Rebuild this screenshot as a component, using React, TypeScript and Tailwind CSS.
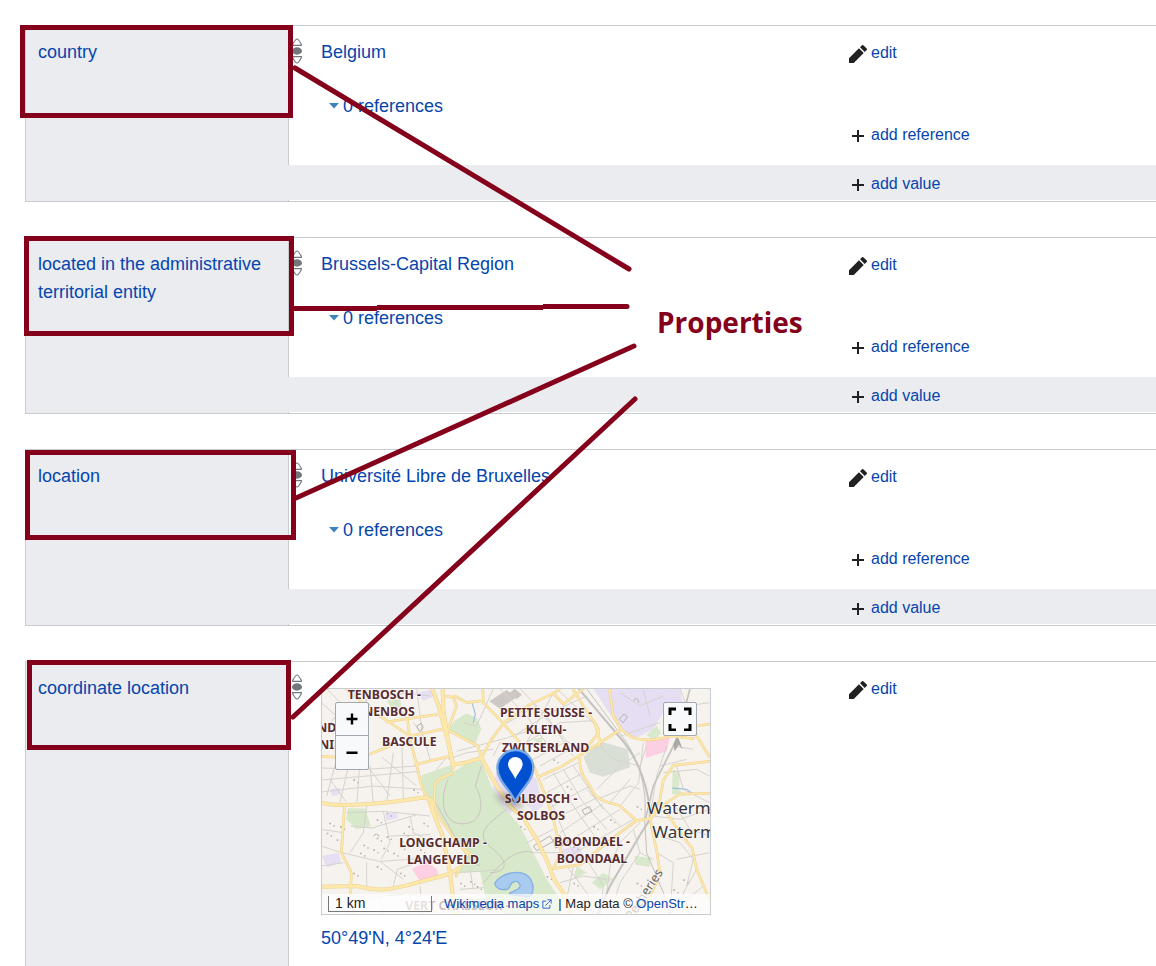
import type { ReactNode } from 'react';

const majorRoads = [
  'M335 5 L356 60 L382 160 L400 236 L436 230 L484 216 L530 300 L570 360 L610 396 L650 460 L684 530 L702 580 L730 620 L752 690',
  'M368 5 L370 70 L380 140 L398 236',
  'M4 350 C60 366 200 352 300 336 C340 332 340 350 336 372 L368 450 L390 560 L398 625 L408 690',
  'M4 602 L110 600 C180 618 210 610 260 598 L388 564 L420 545',
];

const roads = [
  'M75 5 L150 70 L270 150',
  'M270 150 L376 128 L440 162 L474 180 L484 216',
  'M4 212 L80 214 L150 204 L210 180',
  'M200 108 L262 98 L350 86',
  'M262 98 L270 160 L290 236 L302 290 L336 372',
  'M286 236 L384 212',
  'M400 236 L398 262 C370 276 346 274 344 304 C338 360 350 390 376 420 L420 480 L444 504 L420 545 L408 570',
  'M420 480 L460 510',
  'M404 30 L440 50 L490 44 L488 8',
  'M376 30 L400 34 L410 60 L380 140',
  'M490 50 L550 112 L600 170 L640 236 L656 280 L680 340 L700 400 L724 500',
  'M484 216 L512 164 L552 110 L630 55 L700 22 L720 8',
  'M656 272 L720 244 L780 208 L840 170 L900 132',
  'M780 208 C776 260 792 270 812 304 C824 340 850 344 900 360 L950 404 L990 398',
  'M758 8 L790 60 L824 110 L840 165 L836 180',
  'M784 206 L836 140 L830 118',
  'M868 8 L880 90 L904 130 C940 170 1000 166 1050 150 L1120 158',
  'M1090 60 L1130 150 L1168 212',
  'M1130 120 L1168 114',
  'M1168 226 L1060 238 L1030 282 L1020 340 L990 398 L1010 496 L1022 570',
  'M990 398 L1040 350 L1080 324 L1168 322',
  'M1040 380 L1080 440 L1116 486 L1130 550 L1168 640',
  'M700 548 L780 536 L836 490 L900 440 L950 404',
  'M724 500 L700 548',
  'M74 356 L64 500 L94 560 L92 620 L100 690',
  'M940 690 L990 630 L1010 590',
  'M700 22 L730 54 L790 8',
];

const streets = [
  'M20 8 L70 60 L10 140 M4 50 L60 100 L110 160 M40 190 L80 120 L140 40 M110 8 L180 96',
  'M200 8 L260 98 M290 8 L300 90 M170 40 L260 20 L330 30 M280 110 L310 150 L330 220 M300 90 L310 170',
  'M4 246 L140 250 L290 240 M4 282 L300 256 M20 330 L50 220 M60 350 L90 220 M110 356 L120 224 M160 352 L150 240 M200 348 L220 200 M250 340 L246 176',
  'M4 318 L160 300 L310 310 M150 250 L210 330 M30 280 L80 350 M186 214 L290 300',
  'M410 196 L560 156 L640 130 M384 220 L440 200 L520 190 M350 250 L380 214',
  'M80 380 L190 376 L330 390 M190 376 L210 470 L184 520 M92 420 L156 426 L290 386 M4 430 L70 440 M140 360 L130 440 L90 500',
  'M270 390 L280 440 L340 470 M210 450 L330 446 M66 500 L150 520 L180 526 L250 580 M140 530 L140 600 M180 526 L330 516 L380 520',
  'M4 540 L70 530 M4 480 L64 500 M220 600 L232 550 L330 516 M100 640 L250 625 M180 630 L190 690 M300 600 L310 690',
  'M400 560 L480 556 L540 550 M420 610 L490 605 M450 550 L460 610 M390 640 L480 640',
  'M430 110 L470 120 L520 8 M540 8 L620 90 L700 200 M600 8 L680 90 L760 210 M640 55 L740 166 L800 200',
  'M560 112 L650 60 M585 148 L690 80 L800 30 M600 180 L720 110 L820 104 M640 220 L740 166 M700 20 L620 170',
  'M710 8 L840 130 M520 210 L540 170 L590 180 M660 240 L750 190',
  'M670 280 L780 228 M680 320 L790 260 M690 365 L810 300 M700 400 L830 336 M720 440 L850 352 M724 480 L900 370 M730 520 L940 400',
  'M700 260 L760 360 L830 460 M730 250 L790 350 L860 430 M760 240 L850 370 M800 310 L900 420 M690 340 L740 460 L780 536',
  'M830 310 L900 240 L960 200 M840 336 L930 300 L960 310 M870 350 L930 280 M900 360 L956 290 L970 170',
  'M840 180 L880 220 L960 240 L980 180 M904 150 L960 130 L1020 110 M900 20 L960 60 L1030 30 M970 10 L990 90 M1080 8 L1100 60 L1168 50',
  'M1040 180 L1010 270 L990 390 M1020 240 L1100 220 M1060 180 L1120 190 M1030 260 L1130 250 L1168 270 M1070 240 L1090 310 L1168 350',
  'M1000 390 L1080 400 L1168 370 M1060 350 L1110 430 L1168 450 M1020 450 L1080 470 L1120 520 L1100 600 M1010 500 L1060 530 L1050 690 M1070 520 L1168 500',
  'M1130 550 L1090 620 L1110 690 M1150 600 L1100 640 M960 410 L900 470 L870 540 L860 625 M960 500 L900 590 L870 690 M940 430 L960 500 L1000 520',
  'M620 470 L700 430 M640 500 L730 500 M740 540 L800 620 L820 690 M800 520 L850 600 L840 690 M720 590 L790 570 L860 580 M760 540 L740 640',
];

const park = [
  'M304 268 L394 236 L398 260 L440 232 L484 226 L514 300 L556 370 L600 420 L640 500 L680 580 L720 640 L720 690 L570 690 L500 650 L480 556 L412 562 L420 540 L440 510 L376 420 L340 350 L310 330 Z',
  'M380 138 L404 104 L440 82 L470 96 L484 130 L466 172 Z',
  'M84 366 L136 368 L152 420 L110 430 L78 400 Z',
];

const hatch = [
  [130, 476], [160, 490], [200, 450], [250, 440], [300, 490], [310, 410], [28, 410], [20, 440], [50, 460], [100, 280],
  [120, 500], [170, 540], [240, 560], [420, 590], [450, 585], [470, 600], [680, 570], [760, 590], [790, 640], [1060, 610],
  [1090, 580], [950, 590], [640, 330], [600, 420], [100, 560], [200, 380], [220, 500], [170, 400], [950, 360], [870, 400],
  [280, 310], [60, 420], [240, 480], [760, 480], [820, 420], [740, 300], [700, 220], [170, 455], [190, 485], [265, 420],
];

interface PlaceLabel {
  x: number;
  y: number;
  text: string;
}

const places: PlaceLabel[] = [
  { x: 193, y: 39, text: 'TENBOSCH -' },
  { x: 186, y: 91, text: 'TENENBOS' },
  { x: 268, y: 179, text: 'BASCULE' },
  { x: 678, y: 93, text: 'PETITE SUISSE -' },
  { x: 678, y: 145, text: 'KLEIN-' },
  { x: 677, y: 197, text: 'ZWITSERLAND' },
  { x: 663, y: 350, text: 'SOLBOSCH -' },
  { x: 663, y: 402, text: 'SOLBOS' },
  { x: 369, y: 482, text: 'LONGCHAMP -' },
  { x: 369, y: 534, text: 'LANGEVELD' },
  { x: 816, y: 479, text: 'BOONDAEL -' },
  { x: 816, y: 530, text: 'BOONDAAL' },
  { x: 412, y: 671, text: 'VERT CHASSEUR -' },
  { x: 20, y: 138, text: 'ND' },
  { x: 20, y: 189, text: 'NI' },
];

function MapDrawing() {
  return (
    <svg viewBox="6 9 1164 675" className="block h-full w-full" aria-label="Map of Solbosch" role="img">
      <defs>
        <filter id="pin-shadow" x="-50%" y="-50%" width="200%" height="200%">
          <feGaussianBlur stdDeviation="10" />
        </filter>
      </defs>
      <rect x="0" y="0" width="1180" height="700" fill="#f6f2ed" />
      <g fill="#e6def3">
        <path d="M820 8 L1080 8 L1090 60 L1040 60 L1000 130 L940 160 L900 130 L860 70 Z" />
        <path d="M530 250 L600 240 L650 280 L670 360 L640 380 L600 330 L560 400 L514 330 Z" />
        <path d="M6 510 L56 500 L64 530 L20 544 Z M720 490 L780 480 L790 520 L740 530 Z M196 384 L230 378 L234 396 L200 404 Z M30 310 L60 305 L62 325 L36 330 Z" />
        <path d="M290 20 L330 12 L344 30 L310 44 Z M800 210 L830 196 L840 215 L810 230 Z" />
      </g>
      <g fill="#d8e8ca">
        {park.map((d) => <path key={d} d={d} />)}
        <path d="M944 510 L992 516 L990 542 L946 536 Z M980 146 L1010 120 L1024 140 L1000 164 Z M1058 250 L1080 262 L1076 310 L1096 330 L1056 324 Z M200 42 L240 40 L244 62 L212 66 Z M816 590 L850 560 L880 580 L840 610 Z M770 540 L800 560 L760 580 Z M640 160 L668 154 L664 180 Z" />
      </g>
      <path d="M790 214 L840 166 L924 190 L930 244 L850 272 L810 260 Z" fill="#dadfd6" />
      <path d="M976 160 L1050 152 L1040 196 L978 216 Z M276 550 L320 524 L350 550 L356 570 L300 584 Z" fill="#fccfe2" />
      <path d="M508 46 L560 12 L590 34 L540 68 Z M570 20 L584 8 L606 26 L590 40 Z" fill="#cdc8c5" />
      <g fill="none" stroke="#c9c5c1" strokeWidth="3">
        {streets.map((d) => <path key={d} d={d} stroke="#d6d3cf" />)}
        <path d="M384 280 C350 360 380 430 450 410 C490 396 490 340 466 300 L484 240 M560 370 C480 430 470 450 520 490 C560 520 570 560 510 560 M640 500 C580 480 530 550 490 590 M340 340 C380 400 430 520 480 540" />
      </g>
      <g fill="none" stroke="#c4c2c0">
        <path d="M776 8 L896 150 C960 220 990 320 990 400 L964 440 L870 600 L830 690" strokeWidth="6" />
        <path d="M800 8 L920 170 C970 250 980 330 974 400" strokeWidth="3" />
        <path d="M1110 8 L1070 160 L1000 300 L976 400" strokeWidth="5" />
        <path d="M974 404 L980 500 L1030 620 L1050 690" strokeWidth="3" />
      </g>
      <path d="M1060 175 L1072 148 L1088 190 L1076 176 L1064 196 Z" fill="#aaa8a6" />
      <g fill="#b7b1ad">
        {hatch.map(([x, y]) => <path key={`${x}-${y}`} d={`M${x} ${y} h5 v5 h-5 Z M${x + 12} ${y + 8} h4 v4 h-4 Z`} />)}
      </g>
      <g fill="none" stroke="#b9b1ae" strokeWidth="3">
        <path d="M898 100 l14 -16 l10 8 l-12 18 Z M940 46 q12 -20 16 4 M290 120 l14 -8 l6 14 l-12 10 Z M640 480 l50 -30 l10 16 l-50 28 Z M700 460 l20 -12 l10 30 l-24 8 Z M786 372 l22 -10 l8 14 l-22 10 Z M160 450 q10 -12 18 2" />
      </g>
      <g fill="none" stroke="#8fb8de" strokeWidth="3">
        <path d="M456 50 L466 84 L460 110 M1056 306 L1100 310 L1120 324" />
      </g>
      <path d="M524 592 C540 560 610 544 632 580 C646 606 640 640 610 630 L570 626 C560 616 606 616 600 596 C590 578 574 588 570 600 C566 616 530 616 524 592 Z" fill="#a9cbf0" stroke="#86b0e2" strokeWidth="4" />
      <g fill="none" stroke="#ecd08f" strokeLinejoin="round" strokeLinecap="round">
        {roads.map((d) => <path key={d} d={d} strokeWidth="8" />)}
        {majorRoads.map((d) => <path key={d} d={d} strokeWidth="12" />)}
      </g>
      <g fill="none" stroke="#fde8ac" strokeLinejoin="round" strokeLinecap="round">
        {roads.map((d) => <path key={d} d={d} strokeWidth="5" />)}
        {majorRoads.map((d) => <path key={d} d={d} strokeWidth="9" />)}
      </g>
      <g
        className="font-['Noto_Sans',sans-serif] font-bold"
        fontSize="37"
        textAnchor="middle"
        fill="#582c30"
        stroke="#ffffff"
        strokeOpacity="0.7"
        strokeWidth="5"
        paintOrder="stroke"
      >
        {places.map((p) => <text key={p.text} x={p.x} y={p.y}>{p.text}</text>)}
      </g>
      <g className="font-['Noto_Sans',sans-serif]" fontSize="51" fill="#35353a" stroke="#ffffff" strokeOpacity="0.7" strokeWidth="5" paintOrder="stroke">
        <text x="981" y="384">Watermael-</text>
        <text x="997" y="457">Watermaal-</text>
      </g>
      <text x="936" y="704" transform="rotate(-57 936 704)" className="font-['Noto_Sans',sans-serif]" fontSize="38" fill="#6b6259" stroke="#ffffff" strokeOpacity="0.6" strokeWidth="4" paintOrder="stroke">
        Pêcheries
      </text>
      <ellipse cx="570" cy="344" rx="44" ry="16" transform="rotate(25 570 344)" fill="#222" opacity="0.3" filter="url(#pin-shadow)" />
      <path d="M586 348 C576 316 532 286 532 246 A54 54 0 0 1 640 246 C640 286 596 316 586 348 Z" fill="#0050d0" stroke="#78a9ea" strokeWidth="7" />
      <path d="M586 279 C580 262 564 250 564 234 A22 21 0 0 1 608 234 C608 250 592 262 586 279 Z" fill="#ffffff" />
    </svg>
  );
}

function RankIcon() {
  return (
    <svg viewBox="0 0 10 26" className="h-[26px] w-[10px]" fill="none" stroke="#72777d" strokeWidth="1.2" aria-hidden="true">
      <path d="M.7 7.400 L.7 6.300 Q3.600 1 5 1 Q6.400 1 9.300 6.300 V7.400 Z" />
      <path d="M.7 18.600 V19.700 Q3.600 25 5 25 Q6.400 25 9.300 19.700 V18.600 Z" />
      <ellipse cx="5" cy="13" rx="5" ry="3.700" fill="#72777d" stroke="none" />
    </svg>
  );
}

const editPath = 'm16.77 8 1.94-2a1 1 0 0 0 0-1.41l-3.34-3.3a1 1 0 0 0-1.41 0L12 3.23zM1 14.25V19h4.75l9.96-9.96-4.75-4.75z';
const addPath = 'M11 9V4H9v5H4v2h5v5h2v-5h5V9z';

function Action({ icon, children }: { icon: string; children: ReactNode }) {
  return (
    <a href="#" className="flex h-7 w-fit items-center gap-[3px] pt-[2px] text-base hover:underline">
      <svg viewBox="0 0 20 20" className="mt-[2px] h-5 w-5 shrink-0 text-[#202122]" fill="currentColor" aria-hidden="true">
        <path d={icon} />
      </svg>
      <span>{children}</span>
    </a>
  );
}

function Row({ children, action }: { children?: ReactNode; action?: ReactNode }) {
  return (
    <div className="grid grid-cols-[minmax(0,559px)_minmax(200px,1fr)]">
      <div className="min-w-0">{children}</div>
      <div>{action}</div>
    </div>
  );
}

function Group({ property, last, children }: { property: string; last?: boolean; children: ReactNode }) {
  return (
    <section className={`grid grid-cols-[263px_minmax(0,1fr)] border-t border-l border-[#c8ccd1] ${last ? '' : 'border-b'}`}>
      <div className="border-r border-[#c8ccd1] bg-[#eaecf0] pt-3 pr-6 pl-3">
        <a href="#" className="block text-[18px] leading-7 hover:underline">{property}</a>
      </div>
      <div className="min-w-0">{children}</div>
    </section>
  );
}

function Statement({ property, value }: { property: string; value: string }) {
  return (
    <Group property={property}>
      <div className="pt-3 pb-[17px]">
        <Row action={<Action icon={editPath}>edit</Action>}>
          <div className="flex items-start text-[18px] leading-7">
            <span className="w-8 shrink-0 pl-[3px]"><RankIcon /></span>
            <a href="#" className="hover:underline">{value}</a>
          </div>
        </Row>
        <div className="mt-[26px] pl-10">
          <button type="button" className="flex h-7 items-center gap-1 text-[18px] leading-7">
            <svg viewBox="0 0 10 6" className="h-[6px] w-[10px]" fill="#3d85b8" aria-hidden="true"><path d="M0 0h10L5 5.5z" /></svg>
            0 references
          </button>
        </div>
        <Row action={<Action icon={addPath}>add reference</Action>} />
      </div>
      <div className="relative mb-px -ml-px bg-[#eaecf0] py-1 pl-px">
        <div className="h-[27px]">
          <Row action={<Action icon={addPath}>add value</Action>} />
        </div>
      </div>
    </Group>
  );
}

function MapCard() {
  return (
    <div className="relative h-[227px] w-[390px] max-w-full overflow-hidden border border-[#c8ccd1]">
      <MapDrawing />
      <div className="absolute top-[13px] left-[13px] flex w-[34px] flex-col rounded-[2px] border border-[#a2a9b1] bg-[#f8f9fa] text-black">
        <button type="button" aria-label="Zoom in" className="flex h-[33px] items-center justify-center border-b border-[#a2a9b1]">
          <svg viewBox="0 0 12 12" className="h-3 w-3" fill="currentColor"><path d="M4.800 .5h2.400v4.300h4.300v2.400H7.200v4.300H4.800V7.200H.5V4.800h4.300z" /></svg>
        </button>
        <button type="button" aria-label="Zoom out" className="flex h-[33px] items-center justify-center">
          <svg viewBox="0 0 12 12" className="h-3 w-3" fill="currentColor"><path d="M.5 4.500h11v2.500H.5z" /></svg>
        </button>
      </div>
      <button type="button" aria-label="Full screen" className="absolute top-[13px] right-[13px] flex h-[34px] w-[34px] items-center justify-center rounded-[2px] border border-[#a2a9b1] bg-[#f8f9fa] text-black">
        <svg viewBox="0 0 24 24" className="h-6 w-6" fill="none" stroke="currentColor" strokeWidth="3">
          <path d="M2 8V2h6M16 2h6v6M22 17v6h-6M8 23H2v-6" />
        </svg>
      </button>
      <div className="absolute inset-x-0 bottom-0 flex h-5 items-center bg-white/70 pr-3 pl-[6px] text-[13px] leading-5 text-[#222]">
        <span className="mr-3 h-4 w-[104px] shrink-0 border border-t-0 border-[#777] bg-white/50 pl-[6px] text-[14px] leading-[14px]">1 km</span>
        <a href="#" className="flex shrink-0 items-center gap-[3px] text-[#0645ad]">
          Wikimedia maps
          <svg viewBox="0 0 12 12" className="h-[10px] w-[10px]" fill="none" stroke="#3366cc" strokeWidth="1.2" aria-hidden="true">
            <path d="M5 2.5H1v8.500h8.500V7M6.500 1H11v4.500M11 1 8 4M4 8l4-4" />
          </svg>
        </a>
        <span className="min-w-0 truncate pl-[6px]">
          | Map data © <a href="#" className="text-[#0645ad]">OpenStreetMap contributors</a>
        </span>
      </div>
    </div>
  );
}

function Annotations() {
  return (
    <div className="pointer-events-none absolute inset-0 overflow-hidden text-[#85001a]">
      <svg width="1156" height="966" viewBox="0 0 1156 966" fill="none" stroke="currentColor" strokeWidth="5" aria-hidden="true">
        <rect x="22.5" y="27.5" width="268" height="88" />
        <rect x="26.5" y="238.5" width="265" height="95" />
        <rect x="27.5" y="452.5" width="266" height="85" />
        <rect x="29.5" y="662.5" width="259" height="85" />
        <path d="M294 308.500 H377 M377 307.500 H543 M543 306.500 H626" />
        <g strokeLinecap="round">
          <path d="M295 68 L629 269" />
          <path d="M620 306.500 H627" />
          <path d="M296 498 L634 346" />
          <path d="M293 717 L635 399" />
        </g>
      </svg>
      <p className="absolute top-[302px] left-[657px] font-['Open_Sans',sans-serif] text-[28px] leading-10 font-bold">Properties</p>
    </div>
  );
}

export default function App() {
  return (
    <main className="relative overflow-hidden bg-white pt-[25px] pl-[25px] font-['Liberation_Sans',Arial,sans-serif] text-[#0645ad]">
      <div className="flex flex-col gap-[35px]">
        <Statement property="country" value="Belgium" />
        <Statement property="located in the administrative territorial entity" value="Brussels-Capital Region" />
        <Statement property="location" value="Université Libre de Bruxelles" />
        <Group property="coordinate location" last>
          <div className="pt-3 pb-[14px]">
            <Row action={<Action icon={editPath}>edit</Action>}>
              <div className="flex items-start">
                <span className="w-8 shrink-0 pl-[3px]"><RankIcon /></span>
                <div className="min-w-0 pt-[14px]">
                  <MapCard />
                  <a href="#" className="mt-[9px] block text-[18px] leading-7 hover:underline">50°49'N, 4°24'E</a>
                </div>
              </div>
            </Row>
          </div>
        </Group>
      </div>
      <Annotations />
    </main>
  );
}
